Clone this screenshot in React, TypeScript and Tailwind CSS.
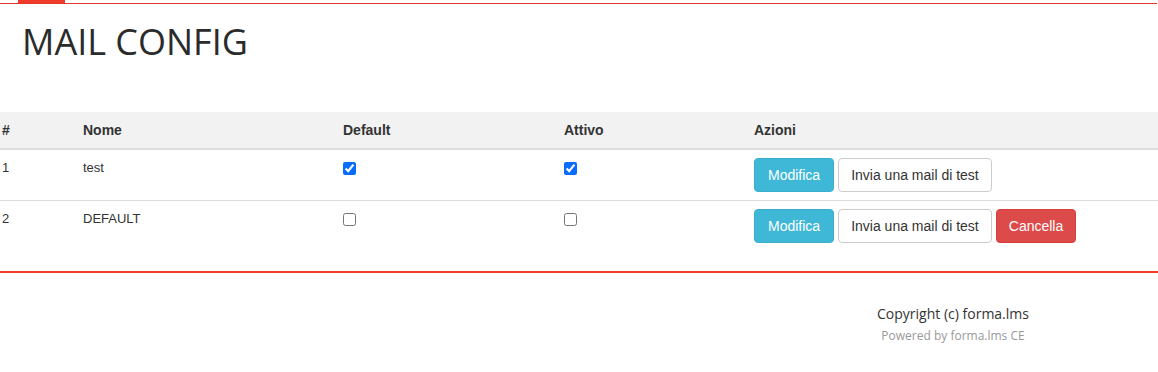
const rows = [
  { id: 1, name: 'test', isDefault: true, active: true, canDelete: false },
  { id: 2, name: 'DEFAULT', isDefault: false, active: false, canDelete: true },
];

function Btn({ kind, children }: { kind: 'info' | 'default' | 'danger'; children: string }) {
  const styles = {
    info: 'bg-[#3fb8d8] border-[#3aaecd] text-white px-[13px]',
    default: 'bg-white border-[#cccccc] text-[#333333] px-3',
    danger: 'bg-[#dd4a4a] border-[#d43f3a] text-white px-3',
  };
  return (
    <button
      type="button"
      className={`h-[34px] border rounded-[4px] text-[14px] leading-5 font-['Liberation_Sans',Arial,sans-serif] ${styles[kind]}`}
    >
      {children}
    </button>
  );
}

export default function App() {
  return (
    <div className="w-[1158px] min-h-[372px] bg-white text-[#333333] font-['Liberation_Sans',Arial,sans-serif]">
      {/* top accent bar */}
      <div className="relative h-1">
        <div className="absolute left-0 right-[1px] top-[3px] h-px bg-[#e2382c]" />
        <div className="absolute left-[18px] top-0 w-[47px] h-[3px] bg-[#f03a2a]" />
      </div>

      <h1 className="pl-[22px] pt-[16px] font-['Open_Sans',sans-serif] text-[36px] leading-[43px] text-[#2b2b2b]">
        MAIL CONFIG
      </h1>

      <table className="mt-[49px] w-full border-collapse text-[13px]">
        <thead>
          <tr className="bg-[#f2f2f2] border-b-2 border-[#dddddd]">
            <th className="w-[83px] pl-[2px] py-2 text-left text-[14px] leading-5 font-bold">#</th>
            <th className="w-[260px] py-2 text-left text-[14px] leading-5 font-bold">Nome</th>
            <th className="w-[221px] py-2 text-left text-[14px] leading-5 font-bold">Default</th>
            <th className="w-[190px] py-2 text-left text-[14px] leading-5 font-bold">Attivo</th>
            <th className="py-2 text-left text-[14px] leading-5 font-bold">Azioni</th>
          </tr>
        </thead>
        <tbody>
          {rows.map((r) => (
            <tr key={r.id} className="border-b border-[#dddddd] last:border-b-0 align-top">
              <td className="pl-[2px] py-2 leading-5">{r.id}</td>
              <td className="py-2 leading-5">{r.name}</td>
              <td className="py-2">
                <input
                  type="checkbox"
                  readOnly
                  checked={r.isDefault}
                  className="block mt-[4px] w-[13px] h-[13px] accent-[#0a6cff]"
                />
              </td>
              <td className="py-2">
                <input
                  type="checkbox"
                  readOnly
                  checked={r.active}
                  className="block mt-[4px] w-[13px] h-[13px] accent-[#0a6cff]"
                />
              </td>
              <td className="py-2">
                <div className="flex gap-1">
                  <Btn kind="info">Modifica</Btn>
                  <Btn kind="default">Invia una mail di test</Btn>
                  {r.canDelete && <Btn kind="danger">Cancella</Btn>}
                </div>
              </td>
            </tr>
          ))}
        </tbody>
      </table>

      <div className="mt-[20px] border-t-2 border-[#f03a2a]" />

      <footer className="ml-auto mr-[55px] w-[300px] pt-[31px] text-center font-['Open_Sans',sans-serif]">
        <p className="text-[14px] leading-5 text-[#333333]">Copyright (c) forma.lms</p>
        <p className="mt-[2px] text-[12px] leading-5 text-[#999999]">Powered by forma.lms CE</p>
      </footer>
    </div>
  );
}
